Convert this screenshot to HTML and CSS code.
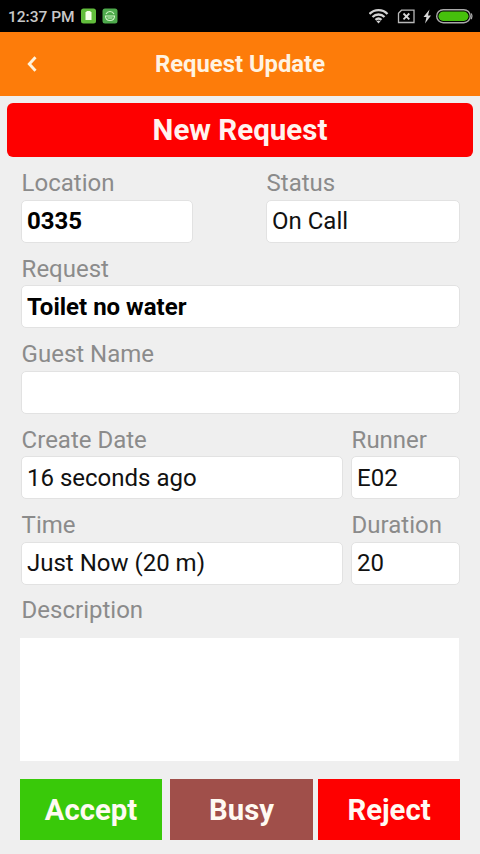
FILE: index.html
```html
<!DOCTYPE html>
<html lang="en">
<head>
<meta charset="utf-8">
<title>Request Update</title>
<link rel="stylesheet" href="styles.css">
</head>
<body>
<div class="statusbar">
  <span class="clock">12:37 PM</span>
  <svg class="notices" width="38" height="16" viewBox="0 0 38 16">
    <rect x="0" y="0.5" width="15" height="15" rx="2.5" fill="#62bd3c"/>
    <path d="M5.500 3h4v1h1v8h-6V4h1z" fill="#f4ffe9"/>
    <rect x="21.500" y="0.500" width="15" height="15" rx="2.500" fill="#4eaa4c"/>
    <path d="M25 6a4.500 4.500 0 0 1 8 0M24.500 8h9q0 4.500-4.500 4.500t-4.500-4.500zM26.500 10h5" fill="none" stroke="#d0f5c7" stroke-width="1.100"/>
  </svg>
  <svg class="system" width="106" height="18" viewBox="0 0 106 18">
    <g fill="none" stroke="#d2d2d2" stroke-width="2.300">
      <path d="M0.500 7a12.500 12.500 0 0 1 18 0M3.500 10a8.500 8.500 0 0 1 12 0M6.500 12.900a4.500 4.500 0 0 1 6 0"/>
    </g>
    <path d="M9.500 16.500l-2-2.200a3 3 0 0 1 4 0z" fill="#d2d2d2"/>
    <path d="M32.500 3.200h12.500v12.300h-15.500v-9.300z" fill="none" stroke="#b8b8b8" stroke-width="1.300"/>
    <path d="M34.500 6.500l5.800 5.800M40.300 6.500l-5.800 5.800" stroke="#d8d8d8" stroke-width="1.800"/>
    <path d="M60.500 2.500l-6 7.500h3l-1.500 6.500 6-8h-3z" fill="#d8d8d8"/>
    <rect x="67.700" y="2.700" width="33.600" height="13" rx="6.500" fill="#000" stroke="#a9a9a9" stroke-width="1.400"/>
    <rect x="69.500" y="4.500" width="30" height="9.400" rx="4.700" fill="#46c00c"/>
    <path d="M102.300 6.500q1.500 2.800 0 5.600" fill="none" stroke="#a9a9a9" stroke-width="1.300"/>
  </svg>
</div>
<header class="header">
  <svg class="back" width="12" height="18" viewBox="0 0 12 18"><path d="M9.500 2.300L3.300 9l6.200 6.700" fill="none" stroke="#fff3dc" stroke-width="2.900"/></svg>
  <h1 class="title">Request Update</h1>
</header>
<main class="page">
  <div class="banner">New Request</div>
  <form class="form">
    <div class="row split">
      <div class="field"><label>Location</label><div class="input strong">0335</div></div>
      <div class="field"><label>Status</label><div class="input">On Call</div></div>
    </div>
    <div class="row">
      <div class="field"><label>Request</label><div class="input strong">Toilet no water</div></div>
    </div>
    <div class="row">
      <div class="field"><label>Guest Name</label><div class="input"></div></div>
    </div>
    <div class="row wide">
      <div class="field"><label>Create Date</label><div class="input">16 seconds ago</div></div>
      <div class="field"><label>Runner</label><div class="input">E02</div></div>
    </div>
    <div class="row wide">
      <div class="field"><label>Time</label><div class="input">Just Now (20 m)</div></div>
      <div class="field"><label>Duration</label><div class="input">20</div></div>
    </div>
    <label class="description-label">Description</label>
    <div class="description"></div>
  </form>
  <div class="actions">
    <button class="action accept">Accept</button>
    <button class="action busy">Busy</button>
    <button class="action reject">Reject</button>
  </div>
</main>
</body>
</html>
```

FILE: styles.css
```css
* { box-sizing: border-box; }
body {
  margin: 0;
  height: 854px;
  overflow: hidden;
  background: #efefef;
  font-family: Roboto, sans-serif;
}
.statusbar {
  display: flex;
  align-items: center;
  height: 32px;
  padding: 0 5px 0 8px;
  background: #000;
}
.clock {
  width: 73px;
  color: #c8c8c8;
  font-size: 15.5px;
  font-weight: 500;
  line-height: 32px;
  padding-top: 1px;
  white-space: nowrap;
}
.notices { display: block; }
.system { display: block; margin-left: auto; }
.header {
  display: grid;
  grid-template-columns: 40px 1fr 40px;
  align-items: center;
  height: 64px;
  background: #fd7c0a;
}
.back { justify-self: end; margin-right: 2px; }
.title {
  margin: 0;
  color: #fff3e2;
  font-size: 23.8px;
  font-weight: 700;
  line-height: 30px;
  text-align: center;
}
.page { padding: 7px 7px 0; }
.banner {
  height: 54px;
  border-radius: 6px;
  background: #fe0000;
  color: #fff3ef;
  font-size: 29.5px;
  font-weight: 700;
  line-height: 54px;
  text-align: center;
}
.form { padding: 0 13px 0 14px; }
.row {
  display: grid;
  grid-template-columns: 1fr;
  height: 85.4px;
}
.split { grid-template-columns: 172px 194px; justify-content: space-between; }
.wide { grid-template-columns: 322px 109px; justify-content: space-between; }
label {
  display: block;
  height: 43px;
  padding: 11.4px 0 0 0.6px;
  color: #8b8b8b;
  font-size: 24px;
  line-height: 30px;
}
.input {
  height: 43px;
  padding: 0.4px 0 0 5px;
  border: 1px solid #e2e2e2;
  border-radius: 5px;
  background: #fff;
  color: #111;
  font-size: 24px;
  line-height: 41px;
  white-space: nowrap;
}
.strong { color: #000; font-weight: 700; }
.description-label { height: 54px; }
.description {
  height: 123px;
  margin: 0 1px 0 -1px;
  background: #fff;
}
.actions {
  display: flex;
  margin: 18px 13px 0;
}
.action {
  flex: 0 0 142px;
  height: 61px;
  padding: 0;
  border: 0;
  color: #fffaf2;
  font: 700 29.3px/62px Roboto, sans-serif;
}
.accept { margin-right: 8px; background: #39c909; }
.busy { flex-basis: 143px; margin-right: 5px; background: #a04f4a; }
.reject { background: #fe0000; }
```
